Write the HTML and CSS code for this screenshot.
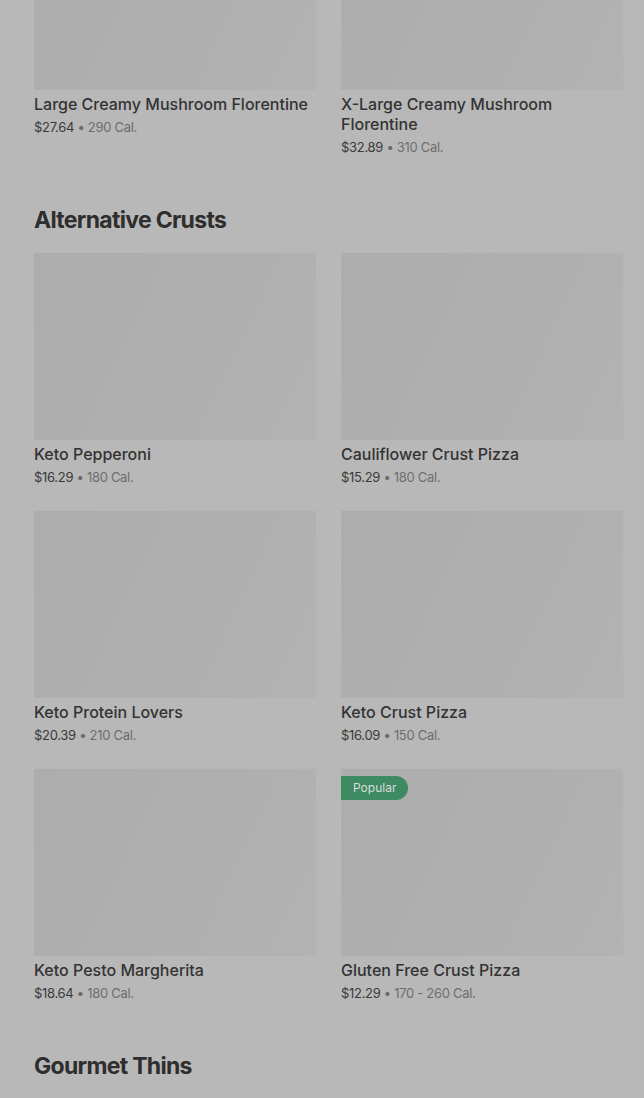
FILE: index.html
```html
<!DOCTYPE html>
<html lang="en">
<head>
  <meta charset="UTF-8" />
  <meta name="viewport" content="width=device-width, initial-scale=1.0"/>
  <title>Menu</title>
  <link rel="stylesheet" href="styles.css">
</head>
<body>
  <main class="menu">
    <section class="category first">
      <div class="grid">
        <article class="item">
          <div class="thumb"></div>
          <h3>Large Creamy Mushroom Florentine</h3>
          <p class="meta"><span class="price">$27.64</span> • <span class="cal">290 Cal.</span></p>
        </article>
        <article class="item">
          <div class="thumb"></div>
          <h3>X-Large Creamy Mushroom Florentine</h3>
          <p class="meta"><span class="price">$32.89</span> • <span class="cal">310 Cal.</span></p>
        </article>
      </div>
    </section>

    <section class="category">
      <h2>Alternative Crusts</h2>
      <div class="grid">
        <article class="item">
          <div class="thumb"></div>
          <h3>Keto Pepperoni</h3>
          <p class="meta"><span class="price">$16.29</span> • <span class="cal">180 Cal.</span></p>
        </article>
        <article class="item">
          <div class="thumb"></div>
          <h3>Cauliflower Crust Pizza</h3>
          <p class="meta"><span class="price">$15.29</span> • <span class="cal">180 Cal.</span></p>
        </article>
        <article class="item">
          <div class="thumb"></div>
          <h3>Keto Protein Lovers</h3>
          <p class="meta"><span class="price">$20.39</span> • <span class="cal">210 Cal.</span></p>
        </article>
        <article class="item">
          <div class="thumb"></div>
          <h3>Keto Crust Pizza</h3>
          <p class="meta"><span class="price">$16.09</span> • <span class="cal">150 Cal.</span></p>
        </article>
        <article class="item">
          <div class="thumb"></div>
          <h3>Keto Pesto Margherita</h3>
          <p class="meta"><span class="price">$18.64</span> • <span class="cal">180 Cal.</span></p>
        </article>
        <article class="item">
          <div class="thumb">
            <span class="badge">Popular</span>
          </div>
          <h3>Gluten Free Crust Pizza</h3>
          <p class="meta"><span class="price">$12.29</span> • <span class="cal">170 - 260 Cal.</span></p>
        </article>
      </div>
    </section>

    <section class="category">
      <h2>Gourmet Thins</h2>
    </section>
  </main>
</body>
</html>
```

FILE: styles.css
```css
body {
  margin: 0;
  padding: 0;
  background: #b8b8b8;
  font-family: "Inter", "Roboto", sans-serif;
  color: #333;
  overflow: hidden;
}
.menu {
  padding: 0 20px 0 34px;
}
.category.first {
  margin-top: -98px;
}
.category h2 {
  margin: 47px 0 16px;
  font-size: 23px;
  line-height: 32px;
  font-weight: 700;
  letter-spacing: -0.7px;
  color: #2e2e2e;
}
.grid {
  display: grid;
  grid-template-columns: 283px 283px;
  column-gap: 24px;
  row-gap: 23px;
}
.thumb {
  position: relative;
  height: 188px;
  background: linear-gradient(115deg, #adadad 0%, #afafaf 55%, #b3b3b3 100%);
  box-shadow: inset 0 1px 0 #b6b6b6, inset -1px 0 0 #b6b6b6;
}
.badge {
  position: absolute;
  top: 8px;
  left: 0;
  height: 24px;
  line-height: 24px;
  padding: 0 12px;
  background: #3e8a62;
  color: #dcdcdc;
  font-size: 12px;
  border-radius: 0 12px 12px 0;
}
.item h3 {
  margin: 4px 0 0;
  font-size: 16px;
  line-height: 20px;
  font-weight: 500;
  color: #333;
}
.meta {
  margin: 3px 0 0;
  font-size: 13px;
  line-height: 20px;
  color: #6a6a6a;
  letter-spacing: -0.3px;
}
.price {
  color: #3a3a3a;
}
.cal {
  color: #6e6e6e;
}
```
